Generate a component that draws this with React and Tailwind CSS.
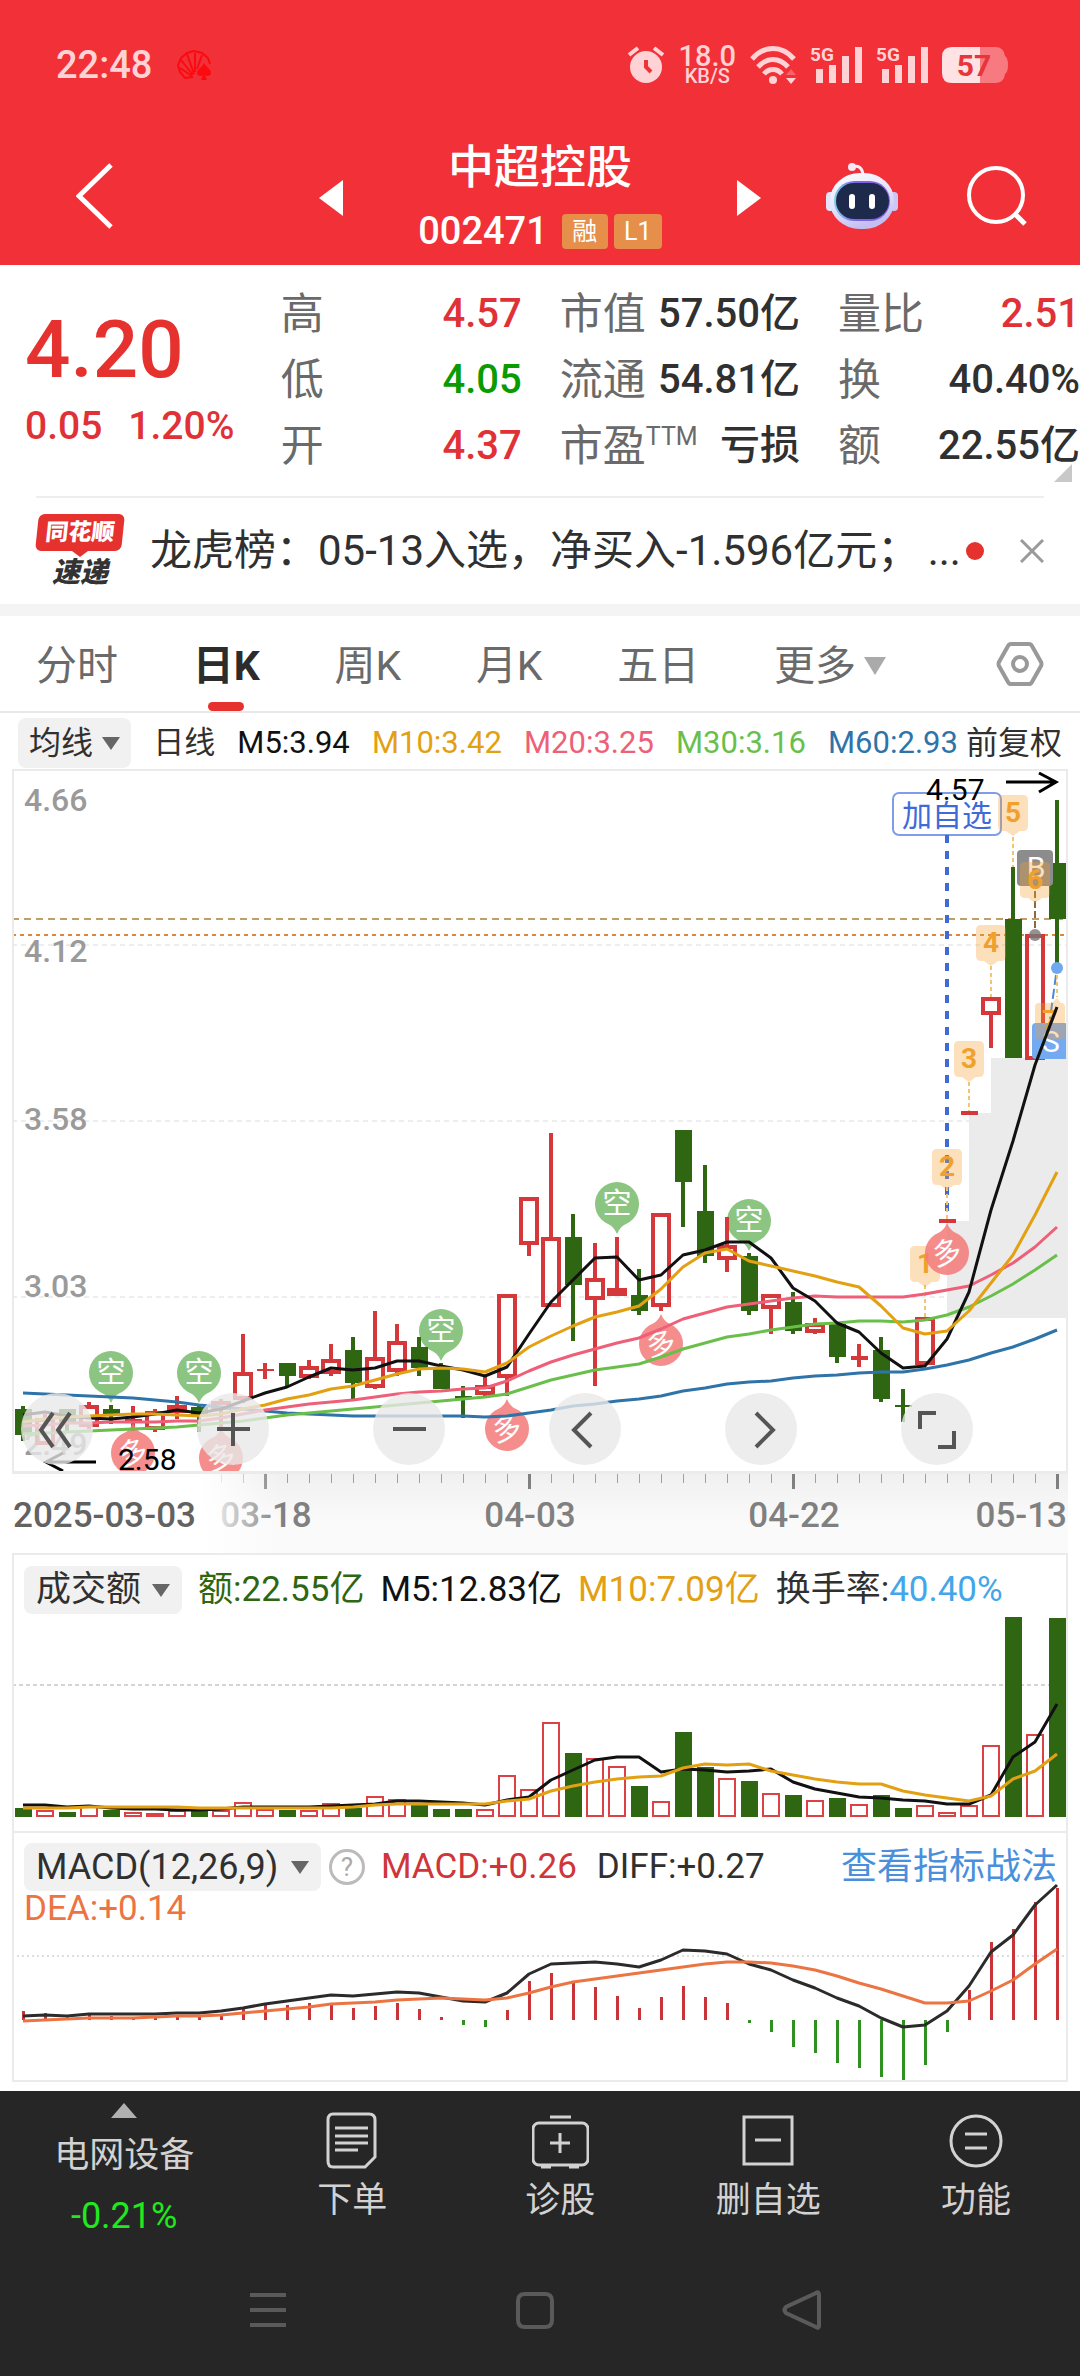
import { useState } from 'react'

const STEP = 22
const FIRST_X = 11
const CHART_FONT = "Roboto, 'Noto Sans CJK SC', sans-serif"

const x = i => FIRST_X + STEP * i

// [up, high, bodyTop, bodyBottom, low] in chart units, top of the pane is 0
const candles = [
  [0, 637, 640, 666, 672], [1, 645, 649, 675, 676], [0, 640, 640, 653, 664], [1, 633, 636, 657, 660],
  [0, 636, 640, 646, 655], [1, 637, 650, 652, 662], [1, 640, 642, 660, 663], [1, 627, 636, 643, 650],
  [0, 637, 638, 647, 663], [1, 630, 632, 640, 659], [1, 565, 603, 630, 634], [1, 594, 600, 602, 610],
  [0, 594, 594, 607, 617], [1, 591, 597, 608, 610], [1, 575, 590, 604, 607], [0, 568, 581, 614, 632],
  [1, 542, 588, 618, 620], [1, 555, 572, 602, 607], [0, 568, 578, 599, 607], [0, 594, 598, 620, 620],
  [0, 617, 627, 630, 649], [1, 608, 616, 625, 628], [1, 525, 525, 608, 627], [1, 428, 428, 475, 487],
  [1, 364, 468, 537, 537], [0, 445, 468, 516, 572], [1, 474, 509, 530, 617], [1, 468, 519, 526, 526],
  [0, 500, 526, 542, 546], [1, 444, 444, 537, 542], [0, 361, 361, 413, 458], [0, 396, 442, 487, 494],
  [1, 448, 476, 490, 503], [0, 484, 487, 542, 546], [1, 525, 525, 539, 565], [0, 523, 533, 562, 565],
  [1, 549, 554, 563, 565], [0, 555, 555, 588, 594], [1, 575, 587, 591, 598], [0, 568, 581, 630, 633],
  [0, 620, 636, 638, 653], [1, 548, 548, 595, 595], [1, 450, 450, 454, 454], [1, 342, 342, 346, 346],
  [1, 228, 228, 245, 279], [0, 98, 150, 289, 289], [1, 165, 165, 290, 290], [0, 31, 94, 150, 198],
]

const averages = [
  { color: '#2f74a8', values: [624, 625, 626, 627, 628, 629, 631, 633, 636, 638, 640, 642, 644, 645, 646, 647, 647, 647, 647, 647, 647, 648, 647, 644, 641, 637, 635, 632, 630, 627, 622, 619, 615, 613, 612, 609, 607, 606, 604, 603, 603, 600, 596, 591, 584, 578, 570, 561] },
  { color: '#6abf4b', values: [665, 664, 663, 662, 661, 660, 659, 658, 656, 654, 652, 649, 646, 644, 642, 640, 638, 636, 634, 632, 630, 628, 625, 618, 611, 606, 601, 598, 595, 588, 580, 574, 568, 565, 561, 558, 555, 554, 552, 552, 553, 551, 546, 538, 527, 515, 501, 486] },
  { color: '#ee5f78', values: [657, 656, 654, 654, 653, 653, 653, 652, 652, 649, 645, 641, 638, 635, 633, 631, 628, 625, 623, 622, 620, 619, 612, 602, 593, 586, 580, 574, 569, 560, 550, 544, 538, 535, 532, 529, 527, 528, 528, 528, 528, 525, 521, 517, 506, 494, 478, 458] },
  { color: '#111111', values: [646, 643, 647, 649, 650, 648, 645, 641, 644, 640, 632, 624, 618, 608, 599, 601, 599, 592, 592, 597, 601, 607, 598, 565, 533, 511, 489, 488, 511, 506, 486, 481, 473, 473, 489, 519, 532, 554, 563, 584, 599, 597, 570, 523, 441, 372, 296, 238] },
  { color: '#e2a012', values: [653, 650, 648, 647, 646, 645, 645, 646, 647, 645, 640, 636, 630, 626, 620, 617, 611, 605, 600, 599, 600, 603, 594, 578, 567, 557, 548, 543, 537, 520, 498, 484, 480, 492, 497, 502, 507, 513, 518, 537, 559, 565, 562, 542, 514, 486, 446, 403] },
]

const volumes = [9, 7, 5, 11, 7, 5, 4, 7, 6, 7, 15, 8, 7, 7, 14, 9, 21, 18, 12, 8, 8, 8, 42, 28, 95, 64, 59, 51, 31, 16, 85, 50, 39, 36, 24, 22, 17, 19, 13, 22, 9, 12, 5, 12, 72, 200, 83, 199]
const volumeM5 = [12, 12, 10, 11, 9, 8, 8, 7, 7, 8, 10, 10, 10, 10, 11, 12, 13, 16, 16, 15, 14, 12, 17, 20, 37, 47, 57, 60, 60, 45, 48, 47, 45, 46, 48, 35, 28, 24, 20, 19, 17, 16, 13, 13, 22, 60, 75, 113]
const volumeM10 = [9, 9, 9, 10, 10, 10, 10, 10, 9, 9, 9, 9, 9, 9, 9, 10, 12, 13, 13, 13, 13, 13, 16, 18, 26, 31, 35, 38, 40, 41, 49, 53, 52, 53, 46, 42, 38, 35, 33, 33, 26, 22, 19, 16, 21, 38, 46, 63]

const macd = [9, 7, 4, 6, 4, 3, 3, 5, 3, 5, 11, 15, 15, 17, 17, 12, 14, 17, 11, 3, -5, -7, 10, 39, 47, 39, 33, 24, 12, 23, 34, 23, 17, -3, -12, -27, -33, -43, -48, -57, -60, -45, -12, 30, 78, 91, 118, 132]
const diff = [4, 5, 4, 6, 6, 6, 6, 7, 7, 9, 12, 16, 19, 22, 25, 24, 26, 28, 27, 23, 19, 18, 27, 46, 56, 57, 58, 56, 53, 60, 70, 69, 66, 56, 50, 40, 32, 22, 14, 2, -7, -5, 9, 34, 68, 85, 115, 135]
const dea = [-1, 0, 1, 2, 2, 2, 3, 4, 4, 5, 7, 9, 11, 13, 16, 17, 18, 20, 21, 22, 21, 20, 22, 27, 33, 38, 41, 44, 47, 50, 53, 56, 58, 58, 57, 54, 50, 44, 37, 31, 24, 17, 17, 19, 29, 40, 56, 71]

const quotes = [
  [
    { label: '高', value: '4.57', color: 'text-[#e03236]' },
    { label: '低', value: '4.05', color: 'text-[#0a9b00]' },
    { label: '开', value: '4.37', color: 'text-[#e03236]' },
  ],
  [
    { label: '市值', value: '57.50亿', color: 'text-[#303030]' },
    { label: '流通', value: '54.81亿', color: 'text-[#303030]' },
    { label: '市盈', sup: 'TTM', value: '亏损', color: 'text-[#303030]' },
  ],
  [
    { label: '量比', value: '2.51', color: 'text-[#e03236]' },
    { label: '换', value: '40.40%', color: 'text-[#303030]' },
    { label: '额', value: '22.55亿', color: 'text-[#303030]' },
  ],
]

export default function App() {
  return (
    <div className="flex min-h-screen w-full flex-col bg-white font-[family-name:Roboto,'Noto_Sans_CJK_SC',sans-serif]">
      <header className="bg-[#f23038] text-white">
        <StatusBar />
        <TitleBar />
      </header>
      <main className="flex-1">
        <Quote />
        <News />
        <div className="h-3 bg-[#f4f4f4]" />
        <PeriodTabs />
        <AverageLegend />
        <div className="px-3">
          <PriceChart />
          <DateAxis />
          <VolumeChart />
          <MacdChart />
        </div>
      </main>
      <BottomBar />
    </div>
  )
}

function StatusBar() {
  return (
    <div className="flex h-[130px] items-center pr-[72px] pl-14 text-[#ffd3d5]">
      <span className="text-[38px] leading-[48px] font-medium">22:48</span>
      <svg viewBox="0 0 36 30" className="ml-6 h-[30px] w-9" aria-hidden="true">
        <g fill="none" stroke="#fb0a10" strokeWidth="2">
          <path d="M17 27 L9 28 L4 22 L2 15 L5 8 L11 3 L18 1 L26 3 L32 8 L34 14" />
          <path d="M16 26 L4 18 M17 25 L5 10 M18 24 L11 4 M19 22 L19 3 M21 19 L26 5" />
        </g>
        <path d="M28 13 C31 18 35 19 35 23 C35 26 31 27 29 25 L31 30 H25 L27 25 C25 27 21 26 21 23 C21 19 26 18 28 13Z" fill="#fb0a10" />
      </svg>
      <div className="ml-auto flex items-center gap-[14px]">
        <svg viewBox="0 0 36 38" className="h-[38px] w-9" aria-hidden="true">
          <circle cx="18" cy="21" r="16" fill="currentColor" />
          <path d="M1 9 L10 2 M35 9 L26 2" stroke="currentColor" strokeWidth="4" />
          <path d="M18 14 V21 L23 26" fill="none" stroke="#f23038" strokeWidth="4" />
        </svg>
        <div className="flex flex-col items-center font-medium">
          <span className="text-[29px] leading-[22px]">18.0</span>
          <span className="text-[20px] leading-[18px]">KB/S</span>
        </div>
        <svg viewBox="0 0 46 38" className="h-[38px] w-[46px]" aria-hidden="true">
          <g fill="none" stroke="currentColor" strokeWidth="5">
            <path d="M2 13 C14 -1 32 -1 44 13" />
            <path d="M8 21 C17 11 29 11 38 21" />
            <path d="M14 28 C19 22 27 22 32 28" />
          </g>
          <circle cx="23" cy="34" r="4" fill="currentColor" />
          <path d="M41 23 L46 29 H36Z" fill="#f76369" />
          <path d="M41 38 L46 32 H36Z" fill="currentColor" />
        </svg>
        <Signal />
        <Signal />
        <svg viewBox="0 0 66 36" className="h-9 w-[66px]" aria-hidden="true">
          <path d="M10 0 H38 V36 H10 Q0 36 0 26 V10 Q0 0 10 0Z" fill="#ffe3e4" />
          <path d="M38 0 H53 Q62 0 63 9 Q66 11 66 18 Q66 25 63 27 Q62 36 53 36 H38Z" fill="#f77a80" />
          <text x="32" y="29" textAnchor="middle" fontSize="30" fontWeight="700" fill="#e8343b" fontFamily={CHART_FONT}>57</text>
        </svg>
      </div>
    </div>
  )
}

function Signal() {
  return (
    <svg viewBox="0 0 52 38" className="h-[38px] w-[52px] overflow-visible" aria-hidden="true">
      <text x="0" y="15" fontSize="19" fontWeight="700" fill="currentColor" fontFamily={CHART_FONT}>5G</text>
      <path d="M6 23 h7 v14 h-7z M19 19 h7 v18 h-7z M32 10 h7 v27 h-7z M45 1 h7 v36 h-7z" fill="currentColor" />
    </svg>
  )
}

function TitleBar() {
  return (
    <div className="grid h-[135px] grid-cols-[1fr_auto_1fr] items-center pr-[52px] pb-3 pl-[76px]">
      <button aria-label="返回" className="justify-self-start">
        <svg viewBox="0 0 38 66" className="h-[66px] w-[38px]">
          <path d="M35 2 L3 33 L35 64" fill="none" stroke="white" strokeWidth="5" />
        </svg>
      </button>
      <div className="flex items-center gap-[75px] pt-1 pr-6">
        <button aria-label="上一只">
          <svg viewBox="0 0 24 36" className="h-9 w-6"><path d="M24 0 V36 L0 18Z" fill="white" /></svg>
        </button>
        <div className="flex flex-col items-center">
          <h1 className="text-[46px] leading-[66px] font-medium">中超控股</h1>
          <div className="flex items-center gap-[6px]">
            <span className="mr-2 text-[38px] leading-[62px] font-medium">002471</span>
            <span className="h-[35px] w-[46px] rounded-sm bg-[#e58f4a] text-center text-[25px] leading-[35px]">融</span>
            <span className="h-[35px] w-12 rounded-sm bg-[#e58f4a] text-center text-[25px] leading-[35px]">L1</span>
          </div>
        </div>
        <button aria-label="下一只">
          <svg viewBox="0 0 24 36" className="h-9 w-6"><path d="M0 0 V36 L24 18Z" fill="white" /></svg>
        </button>
      </div>
      <div className="flex items-center gap-[68px] justify-self-end">
        <button aria-label="智能助手"><Robot /></button>
        <button aria-label="搜索">
          <svg viewBox="0 0 62 62" className="size-[62px]">
            <circle cx="30" cy="30" r="27" fill="none" stroke="white" strokeWidth="4" />
            <path d="M48 48 L59 59" stroke="white" strokeWidth="5" />
          </svg>
        </button>
      </div>
    </div>
  )
}

function Robot() {
  return (
    <svg viewBox="0 0 72 66" className="h-[66px] w-[72px]">
      <defs>
        <linearGradient id="shell" x1="0" y1="0" x2="0.4" y2="1">
          <stop offset="0" stopColor="#ffffff" />
          <stop offset="0.6" stopColor="#e2e2fb" />
          <stop offset="1" stopColor="#c3bff2" />
        </linearGradient>
        <linearGradient id="rim">
          <stop offset="0" stopColor="#7fd0e6" />
          <stop offset="0.4" stopColor="#7f63e6" />
          <stop offset="1" stopColor="#8f5fe0" />
        </linearGradient>
      </defs>
      <path d="M26 4 Q36 1 37 12" fill="none" stroke="#f3eefc" strokeWidth="3" />
      <circle cx="26" cy="4" r="4" fill="#f6e8f5" />
      <rect x="0" y="29" width="9" height="19" rx="4" fill="#e4e3fb" />
      <rect x="63" y="29" width="9" height="19" rx="4" fill="#cbc8f5" />
      <rect x="4" y="10" width="64" height="56" rx="30" ry="27" fill="url(#shell)" />
      <rect x="8" y="18" width="56" height="40" rx="20" fill="url(#rim)" />
      <rect x="10" y="20" width="53" height="36" rx="18" fill="#1e2a4c" />
      <rect x="23" y="31" width="6" height="15" rx="3" fill="white" />
      <rect x="43" y="31" width="6" height="15" rx="3" fill="white" />
    </svg>
  )
}

function Quote() {
  return (
    <section className="relative flex h-[231px] pt-4">
      <div className="w-[26%] shrink-0 pl-[25px] text-[#e6322f]">
        <div className="pt-[29px] text-[80px] leading-[80px] font-medium">4.20</div>
        <div className="flex gap-[26px] pt-4 text-[39px] leading-[40px] font-medium text-[#e03236]">
          <span>0.05</span>
          <span>1.20%</span>
        </div>
      </div>
      <div className="grid flex-1 grid-cols-[241px_1fr_242px] gap-x-[38px]">
        {quotes.map((column, i) => (
          <dl key={i}>
            {column.map(q => (
              <div key={q.label} className="flex h-[66px] items-center justify-between leading-[66px] whitespace-nowrap">
                <dt className="flex text-[43px] text-[#6a6a6a]">
                  {q.label}
                  {q.sup && <sup className="top-0 text-[25px] leading-[48px]">{q.sup}</sup>}
                </dt>
                <dd className={`text-[40px] font-medium ${q.color}`}>{q.value}</dd>
              </div>
            ))}
          </dl>
        ))}
      </div>
      <svg viewBox="0 0 18 18" className="absolute right-2 bottom-[14px] size-[18px]" aria-hidden="true">
        <path d="M18 0 V18 H0Z" fill="#c8c8c8" />
      </svg>
    </section>
  )
}

function News() {
  return (
    <section className="mx-9 flex h-[108px] items-center border-t-2 border-[#eeeeee]">
      <div className="flex w-[88px] flex-col items-center">
        <div className="w-[86px] -skew-x-6 rounded-md bg-[#e5322f] text-center text-[23px] leading-[37px] font-black text-white">同花顺</div>
        <svg viewBox="0 0 16 6" className="h-[6px] w-4" aria-hidden="true"><path d="M0 0 H16 L8 6Z" fill="#e5322f" /></svg>
        <div className="flex gap-1 text-[28px] leading-[32px] font-black text-[#333333] italic">速递</div>
      </div>
      <a href="#news" className="ml-[26px] flex-1 overflow-hidden text-[42px] leading-[60px] whitespace-nowrap text-[#303030]">
        龙虎榜：05-13入选，净买入-1.596亿元；&thinsp;...
      </a>
      <span className="size-[18px] shrink-0 rounded-full bg-[#e5322f]" />
      <button aria-label="关闭" className="ml-9">
        <svg viewBox="0 0 24 24" className="size-6"><path d="M1 1 L23 23 M23 1 L1 23" stroke="#9a9a9a" strokeWidth="3" /></svg>
      </button>
    </section>
  )
}

function PeriodTabs() {
  const [active, setActive] = useState('日K')
  return (
    <nav className="flex h-[97px] items-stretch border-b-2 border-[#e8e8e8] pr-9 pl-9">
      <div className="flex flex-1 justify-between">
        {['分时', '日K', '周K', '月K', '五日'].map(tab => (
          <button
            key={tab}
            onClick={() => setActive(tab)}
            className={`relative flex items-center pt-1 text-[41px] leading-[60px] ${tab === active ? 'font-bold text-[#2c2c2c]' : 'text-[#6a6a6a]'}`}
          >
            {tab}
            {tab === active && <span className="absolute bottom-0 left-1/2 h-[9px] w-9 -translate-x-1/2 rounded-full bg-[#e5322f]" />}
          </button>
        ))}
        <button className="flex items-center gap-2 pt-1 text-[41px] leading-[60px] text-[#6a6a6a]">
          更多
          <svg viewBox="0 0 22 18" className="h-[18px] w-[22px]" aria-hidden="true"><path d="M0 0 H22 L11 18Z" fill="#aaaaaa" /></svg>
        </button>
      </div>
      <button aria-label="设置" className="ml-[110px]">
        <svg viewBox="0 0 48 46" className="h-[46px] w-12" fill="none" stroke="#999999" strokeWidth="4">
          <path d="M15 3 H33 Q35 3 36 5 L45 21 Q46 23 45 25 L36 41 Q35 43 33 43 H15 Q13 43 12 41 L3 25 Q2 23 3 21 L12 5 Q13 3 15 3Z" />
          <circle cx="24" cy="23" r="7" />
        </svg>
      </button>
    </nav>
  )
}

function Picker({ label, value, className }) {
  return (
    <label className={`flex items-center rounded-lg bg-[#f1f1f1] text-[#303030] ${className}`}>
      <span className="sr-only">{label}</span>
      <select className="appearance-none bg-transparent outline-none">
        <option>{value}</option>
      </select>
      <svg viewBox="0 0 18 13" className="h-[13px] w-[18px]" aria-hidden="true"><path d="M0 0 H18 L9 13Z" fill="#666666" /></svg>
    </label>
  )
}

function AverageLegend() {
  return (
    <div className="flex h-14 items-center justify-between pt-1 pr-[18px] pl-[18px] text-[31px] leading-[50px] whitespace-nowrap">
      <Picker label="主图指标" value="均线" className="h-[50px] gap-2 px-[11px] text-[32px]" />
      <span className="text-[#303030]">日线</span>
      <span className="text-[#111111]">M5:3.94</span>
      <span className="text-[#e2a012]">M10:3.42</span>
      <span className="text-[#ee5f78]">M20:3.25</span>
      <span className="text-[#6abf4b]">M30:3.16</span>
      <div className="flex gap-2">
        <span className="text-[#2f74a8]">M60:2.93</span>
        <span className="text-[32px] text-[#303030]">前复权</span>
      </div>
    </div>
  )
}

const points = (values, toY = v => v) => values.map((v, i) => `${x(i)},${toY(v)}`).join(' ')

function Line({ values, toY, color, width = 3 }) {
  return <polyline points={points(values, toY)} fill="none" stroke={color} strokeWidth={width} strokeLinejoin="round" />
}

function Candle({ i, data: [up, high, top, bottom, low] }) {
  const cx = x(i)
  if (!up) {
    return (
      <g fill="#2f6612">
        <rect x={cx - 2} y={high} width="4" height={low - high} />
        <rect x={cx - 8} y={top} width="17" height={bottom - top} />
      </g>
    )
  }
  if (bottom - top < 5) {
    return (
      <g fill="#d5383b">
        <rect x={cx - 2} y={high} width="4" height={low - high} />
        <rect x={cx - 8} y={top} width="17" height={bottom - top} />
      </g>
    )
  }
  return (
    <g stroke="#d5383b" strokeWidth="4" fill="none">
      <path d={`M${cx} ${high} V${top} M${cx} ${bottom} V${low}`} />
      <rect x={cx - 8} y={top + 2} width="16" height={bottom - top - 3} />
    </g>
  )
}

// Short / long signal balloons; long ones point up
function Signpost({ i, y, text }) {
  const long = text === '多'
  return (
    <g transform={`translate(${x(i)} ${y})`} opacity="0.85">
      <g fill={long ? '#f47a7a' : '#78bb6c'}>
        <circle r="22" />
        <path d={long ? 'M-12 -18 Q-3 -22 0 -30 Q3 -22 12 -18Z' : 'M-12 18 Q-3 22 0 30 Q3 22 12 18Z'} />
      </g>
      <text y="10" textAnchor="middle" fontSize="29" fill="#ffffff" transform={long ? 'rotate(-14)' : undefined}>{text}</text>
    </g>
  )
}

function DayTag({ cx, y, text, up }) {
  return (
    <g transform={`translate(${cx} ${y})`}>
      <path
        d={up ? 'M-15 4 Q-15 0 -11 0 H2 L7 -5 L11 0 Q15 0 15 4 V32 Q15 36 11 36 H-11 Q-15 36 -15 32Z' : 'M-15 5 Q-15 0 -10 0 H10 Q15 0 15 5 V31 Q15 36 10 36 H7 L0 41 L-7 36 H-10 Q-15 36 -15 31Z'}
        fill="#f5a030"
        fillOpacity="0.32"
      />
      <text y="27" textAnchor="middle" fontSize="28" fontWeight="700" fill="#f0a02c">{text}</text>
    </g>
  )
}

function PriceChart() {
  return (
    <section className="relative border-2 border-b-[3px] border-[#ebebeb]">
      <svg viewBox="2 2 1052 700" className="block w-full" fontFamily={CHART_FONT}>
        <path d="M0 176 H1056 M0 352 H1056 M0 528 H1056" stroke="#dcdcdc" strokeWidth="1" strokeDasharray="5 4" />
        <path d="M935 549 V452 H957 V344 H979 V289 H1056 V549Z" fill="#ebebeb" />
        <g fontSize="32" fontWeight="500" fill="#9a9a9a">
          <text x="12" y="42">4.66</text>
          <text x="12" y="193">4.12</text>
          <text x="12" y="361">3.58</text>
          <text x="12" y="528">3.03</text>
          <text x="12" y="686">2.49</text>
        </g>
        <path d="M0 150 H1056" stroke="#bf9f68" strokeWidth="2" strokeDasharray="7 5" />
        <path d="M0 166 H1056" stroke="#e0853a" strokeWidth="2" strokeDasharray="4 4" />

        {[4, 8].map(i => <Signpost key={i} i={i} y={604} text="空" />)}
        <Signpost i={19} y={562} text="空" />
        <Signpost i={27} y={435} text="空" />
        <Signpost i={33} y={452} text="空" />

        <rect x="881" y="24" width="108" height="42" rx="6" fill="none" stroke="#7f9de8" strokeWidth="2" />
        <text x="935" y="57" textAnchor="middle" fontSize="30" fill="#3f6ad8">加自选</text>
        <path d="M935 66 V446" stroke="#3f6ad8" strokeWidth="4" strokeDasharray="8 8" />
        <path d="M913 516 V548 M935 418 V450 M957 313 V342 M979 197 V228 M1001 68 V98" stroke="#f2c572" strokeWidth="2" strokeDasharray="4 3" />

        {candles.map((c, i) => <Candle key={i} i={i} data={c} />)}

        <rect x="1005" y="81" width="36" height="36" rx="4" fill="#8c8c8c" />
        <text x="1024" y="109" textAnchor="middle" fontSize="30" fill="#ffffff">B</text>
        <path d="M1023 122 V160" stroke="#8a6a45" strokeWidth="2" strokeDasharray="7 3" />
        <circle cx="1023" cy="166" r="6" fill="#777777" fillOpacity="0.8" />
        <rect x="1020" y="254" width="36" height="36" rx="4" fill="#74aaf0" />
        <text x="1039" y="283" textAnchor="middle" fontSize="30" fill="#ffffff">S</text>
        <circle cx="1045" cy="199" r="6" fill="#6ea8ee" />
        <path d="M1044 206 L1038 250" stroke="#4a8ade" strokeWidth="2" strokeDasharray="10 4" />
        <path d="M1045 206 V228" stroke="#f2c572" strokeWidth="2" strokeDasharray="4 3" />

        <DayTag cx={913} y={477} text="1" />
        <DayTag cx={935} y={380} text="2" />
        <DayTag cx={957} y={272} text="3" />
        <DayTag cx={979} y={156} text="4" />
        <DayTag cx={1001} y={26} text="5" />
        <DayTag cx={1023} y={93} text="6" />
        <DayTag cx={1038} y={234} text="7" up />

        <Signpost i={5} y={684} text="多" />
        <Signpost i={9} y={689} text="多" />
        <Signpost i={22} y={660} text="多" />
        <Signpost i={29} y={575} text="多" />
        <Signpost i={42} y={484} text="多" />

        {averages.map(a => <Line key={a.color} values={a.values} color={a.color} />)}

        <g fontSize="30" fill="#000000">
          <text x="914" y="31">4.57</text>
          <text x="106" y="701">2.58</text>
        </g>
        <g fill="none" stroke="#000000" strokeWidth="3">
          <path d="M994 13 H1044 M1027 4 L1044 13 L1027 23" />
          <path d="M84 693 H34 M51 684 L34 693 L51 702" />
        </g>
      </svg>
      <div className="absolute inset-x-0 bottom-[6px] flex justify-between pr-[93px] pl-[7px]">
        <ChartButton label="最早" path="M32 20 L20 37 L32 54 M49 20 L37 37 L49 54" />
        <ChartButton label="放大" path="M20 36 H53 M36 20 V53" />
        <ChartButton label="缩小" path="M20 36 H53" />
        <ChartButton label="左移" path="M42 20 L25 37 L42 54" />
        <ChartButton label="右移" path="M31 20 L48 37 L31 54" />
        <ChartButton label="全屏" path="M19 36 V20 H35 M53 38 V54 H37" />
      </div>
    </section>
  )
}

function ChartButton({ label, path }) {
  return (
    <button aria-label={label} className="size-[72px] rounded-full bg-[#e8e8e8]/80">
      <svg viewBox="0 0 72 72" className="size-[72px]" fill="none" stroke="#555555" strokeWidth="4">
        <path d={path} />
      </svg>
    </button>
  )
}

function DateAxis() {
  return (
    <svg viewBox="0 0 1056 79" className="block w-full" fontFamily={CHART_FONT} fontSize="35" fontWeight="500">
      <defs>
        <linearGradient id="axis" x1="0" y1="0" x2="0" y2="1">
          <stop offset="0" stopColor="#f0f0f0" />
          <stop offset="0.6" stopColor="#fafafa" />
        </linearGradient>
        <linearGradient id="axisFade">
          <stop offset="0.7" stopColor="#ffffff" />
          <stop offset="1" stopColor="#ffffff" stopOpacity="0" />
        </linearGradient>
      </defs>
      <rect width="1056" height="79" fill="url(#axis)" />
      {candles.map((_, i) => (
        (i + 1) % 12 === 0
          ? <rect key={i} x={x(i) - 1} width="3" height="15" fill="#808080" />
          : <rect key={i} x={x(i)} width="1" height="9" fill="#a0a0a0" />
      ))}
      <g fill="#808080">
        <text x="254" y="53" textAnchor="middle">03-18</text>
        <text x="518" y="53" textAnchor="middle">04-03</text>
        <text x="782" y="53" textAnchor="middle">04-22</text>
        <text x="1055" y="53" textAnchor="end">05-13</text>
      </g>
      <rect width="270" height="79" fill="url(#axisFade)" />
      <text x="1" y="53" fill="#626262">2025-03-03</text>
    </svg>
  )
}

function VolumeChart() {
  const base = 262
  return (
    <section className="grid border-2 border-b-0 border-[#ebebeb]">
      <svg viewBox="2 0 1052 276" className="col-start-1 row-start-1 block w-full">
        <path d="M0 130 H1056" stroke="#d4d4d4" strokeWidth="2" strokeDasharray="4 3" />
        {volumes.map((h, i) => (
          candles[i][0]
            ? <rect key={i} x={x(i) - 8} y={base - h + 1} width="16" height={h - 2} fill="none" stroke="#dc4245" strokeWidth="2" />
            : <rect key={i} x={x(i) - 8} y={base - h} width="17" height={h} fill="#2f6612" />
        ))}
        <Line values={volumeM5} toY={v => base - v} color="#111111" />
        <Line values={volumeM10} toY={v => base - v} color="#e2a012" />
      </svg>
      <div className="col-start-1 row-start-1 flex items-center gap-4 self-start pt-[11px] pl-[10px] text-[35px] leading-[48px] whitespace-nowrap">
        <Picker label="副图指标" value="成交额" className="h-12 gap-[10px] px-3" />
        <span className="text-[#2f6612]">额:22.55亿</span>
        <span className="text-[#111111]">M5:12.83亿</span>
        <span className="text-[#e2a012]">M10:7.09亿</span>
        <span className="text-[#303030]">换手率:<span className="text-[#43a6ea]">40.40%</span></span>
      </div>
    </section>
  )
}

function MacdChart() {
  const zero = 187
  return (
    <section className="mb-[9px] grid border-2 border-[#ebebeb]">
      <svg viewBox="2 0 1052 247" className="col-start-1 row-start-1 block w-full">
        <path d="M0 123 H1056" stroke="#dedede" strokeWidth="2" strokeDasharray="2 3" />
        {macd.map((v, i) => (
          <rect key={i} x={x(i) - 1} y={v > 0 ? zero - v : zero} width="3" height={Math.abs(v)} fill={v > 0 ? '#c93438' : '#2f9120'} />
        ))}
        <Line values={diff} toY={v => zero - v} color="#2b2b2b" />
        <Line values={dea} toY={v => zero - v} color="#ec7443" />
      </svg>
      <div className="col-start-1 row-start-1 self-start pt-[10px] pr-[9px] pl-[10px] text-[35px] whitespace-nowrap">
        <div className="flex items-center leading-[48px]">
          <Picker label="副图指标" value="MACD(12,26,9)" className="h-12 gap-3 px-3 text-[36px]" />
          <button aria-label="说明" className="mr-4 ml-2 size-9 rounded-full border-[3px] border-[#bbbbbb] text-[26px] leading-[30px] text-[#aaaaaa]">?</button>
          <span className="mr-5 text-[#d0353a]">MACD:+0.26</span>
          <span className="text-[#303030]">DIFF:+0.27</span>
          <a href="#guide" className="ml-auto text-[36px] text-[#4a8fdc]">查看指标战法</a>
        </div>
        <div className="leading-[36px] text-[#ec7443]">DEA:+0.14</div>
      </div>
    </section>
  )
}

function BottomBar() {
  return (
    <footer className="bg-[#262626] text-[#d2d2d2]">
      <div className="grid h-[160px] grid-cols-[23%_1fr_1fr_1fr_1fr] text-[35px] leading-[48px]">
        <button className="flex flex-col items-center pt-3">
          <svg viewBox="0 0 26 15" className="h-[15px] w-[26px]" aria-hidden="true"><path d="M13 0 L26 15 H0Z" fill="#b0b0b0" /></svg>
          <span className="mt-[14px]">电网设备</span>
          <span className="mt-3 text-[36px] text-[#1eea1e]">-0.21%</span>
        </button>
        <ToolButton label="下单">
          <path d="M9 3 H45 Q51 3 51 9 V46 L41 56 H9 Q4 56 4 50 V9 Q4 3 9 3Z" />
          <path d="M11 17 H44 M11 25 H44 M11 32 H44 M11 39 H34" />
        </ToolButton>
        <ToolButton label="诊股">
          <rect x="1" y="12" width="55" height="42" rx="6" />
          <path d="M18 6 H39 M28 22 V42 M18 32 H38 M9 56 H19 M37 56 H47" />
        </ToolButton>
        <ToolButton label="删自选">
          <rect x="4" y="6" width="48" height="47" />
          <path d="M15 29 H41" />
        </ToolButton>
        <ToolButton label="功能">
          <circle cx="28" cy="30" r="25" />
          <path d="M17 23 H39 M17 37 H39" />
        </ToolButton>
      </div>
      <div className="grid h-[125px] grid-cols-3 justify-items-center pt-[41px] pr-[144px] pl-[134px]">
        <SystemButton label="最近任务" path="M1 3 H37 M1 18 H37 M1 33 H37" />
        <SystemButton label="主屏幕" path="M9 2 H29 Q36 2 36 9 V28 Q36 35 29 35 H9 Q2 35 2 28 V9 Q2 2 9 2Z" />
        <SystemButton label="返回" path="M36 3 V34 Q36 37 33 35 L3 21 Q0 18 3 15 L33 1 Q36 -1 36 3Z" />
      </div>
    </footer>
  )
}

function ToolButton({ label, children }) {
  return (
    <button className="flex flex-col items-center pt-5">
      <svg viewBox="0 0 57 60" className="h-[60px] w-[57px]" fill="none" stroke="currentColor" strokeWidth="3" aria-hidden="true">
        {children}
      </svg>
      <span className="mt-[6px]">{label}</span>
    </button>
  )
}

function SystemButton({ label, path }) {
  return (
    <button aria-label={label} className="h-[38px] w-[38px]">
      <svg viewBox="0 0 38 38" className="size-[38px] overflow-visible" fill="none" stroke="#5a5a5a" strokeWidth="4">
        <path d={path} />
      </svg>
    </button>
  )
}
